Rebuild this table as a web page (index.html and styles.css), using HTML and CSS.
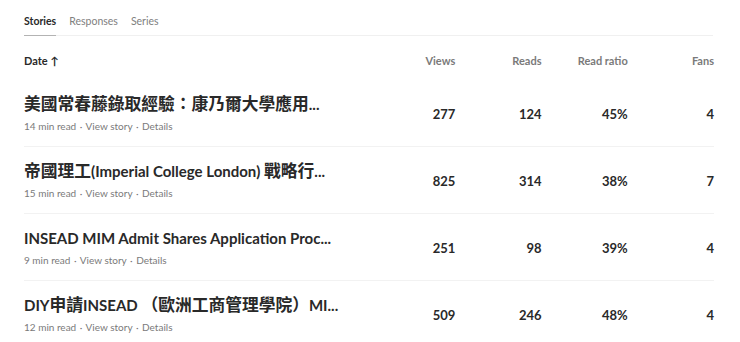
FILE: index.html
```html
<!DOCTYPE html>
<html lang="zh-Hant">
<head>
<meta charset="utf-8">
<title>Stats</title>
<link rel="stylesheet" href="styles.css">
</head>
<body>
<div class="page">
  <nav class="tabs">
    <a class="tab active">Stories</a>
    <a class="tab">Responses</a>
    <a class="tab">Series</a>
  </nav>
  <div class="table">
    <div class="row head">
      <div class="cell title-cell"><span class="sort">Date <span class="arrow">↑</span></span></div>
      <div class="cell num">Views</div>
      <div class="cell num">Reads</div>
      <div class="cell num">Read ratio</div>
      <div class="cell num">Fans</div>
    </div>
    <div class="row story">
      <div class="cell title-cell">
        <div class="title"><span class="han">美國常春藤錄取經驗：康乃爾大學應用</span>...</div>
        <div class="meta">14 min read <span class="dot">·</span> View story <span class="dot">·</span> Details</div>
      </div>
      <div class="cell num val">277</div>
      <div class="cell num val">124</div>
      <div class="cell num val">45%</div>
      <div class="cell num val">4</div>
    </div>
    <div class="row story">
      <div class="cell title-cell">
        <div class="title"><span class="han">帝國理工</span>(Imperial College London) <span class="han">戰略行</span>...</div>
        <div class="meta">15 min read <span class="dot">·</span> View story <span class="dot">·</span> Details</div>
      </div>
      <div class="cell num val">825</div>
      <div class="cell num val">314</div>
      <div class="cell num val">38%</div>
      <div class="cell num val">7</div>
    </div>
    <div class="row story">
      <div class="cell title-cell">
        <div class="title">INSEAD MIM Admit Shares Application Proc...</div>
        <div class="meta">9 min read <span class="dot">·</span> View story <span class="dot">·</span> Details</div>
      </div>
      <div class="cell num val">251</div>
      <div class="cell num val">98</div>
      <div class="cell num val">39%</div>
      <div class="cell num val">4</div>
    </div>
    <div class="row story">
      <div class="cell title-cell">
        <div class="title">DIY<span class="han">申請</span>INSEAD <span class="han">（歐洲工商管理學院）</span>MI...</div>
        <div class="meta">12 min read <span class="dot">·</span> View story <span class="dot">·</span> Details</div>
      </div>
      <div class="cell num val">509</div>
      <div class="cell num val">246</div>
      <div class="cell num val">48%</div>
      <div class="cell num val">4</div>
    </div>
  </div>
</div>
</body>
</html>
```
FILE: styles.css
```css
* { box-sizing: border-box; }
html, body { margin: 0; background: #fff; }
body {
  font-family: Lato, "Noto Sans CJK TC", sans-serif;
  color: #292929;
  -webkit-font-smoothing: antialiased;
}
.page {
  padding: 0 26px 0 24px;
}
.tabs {
  display: flex;
  gap: 13px;
  padding-top: 13px;
  border-bottom: 1px solid #f0f0f0;
  margin-right: 1px;
}
.tab {
  font-size: 10.5px;
  line-height: 16px;
  color: #808080;
  padding-bottom: 6px;
  margin-bottom: -1px;
  border-bottom: 1px solid transparent;
}
.tab.active {
  color: #292929;
  font-weight: 700;
  border-bottom-color: #b3b3b3;
}
.row {
  display: grid;
  grid-template-columns: minmax(0, 1fr) repeat(4, 86.25px);
  align-items: center;
}
.cell { min-width: 0; }
.row.head {
  padding: 17px 0 11px;
  font-size: 11px;
  line-height: 16px;
  font-weight: 700;
  color: #7a7a7a;
}
.sort { color: #292929; }
.arrow { font-size: 11px; }
.num { text-align: right; }
.row.story {
  padding: 14px 0 13px;
  border-bottom: 1px solid #f2f2f2;
}
.title {
  height: 20px;
  font-size: 15px;
  line-height: 20px;
  font-weight: 700;
  color: #292929;
  white-space: nowrap;
}
.han {
  font-size: 16.75px;
  line-height: 1;
  font-family: "Noto Sans CJK TC", sans-serif;
}
.meta {
  margin-top: 5px;
  font-size: 10px;
  line-height: 14px;
  color: #7a7a7a;
}
.dot { margin: 0 1px; }
.val {
  font-size: 13px;
  font-weight: 700;
  color: #292929;
}
```
